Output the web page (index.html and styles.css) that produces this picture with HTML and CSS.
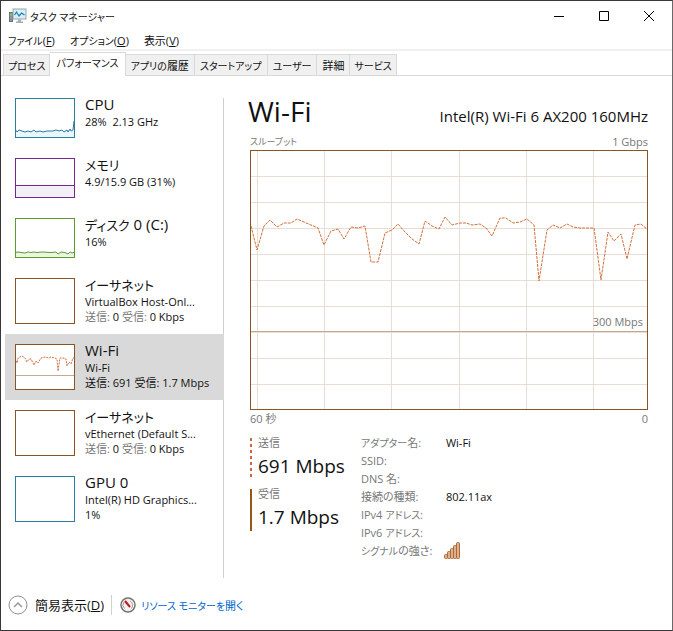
FILE: index.html
```html
<!DOCTYPE html>
<html lang="ja">
<head>
    <meta charset="UTF-8">
    <meta name="viewport" content="width=device-width, initial-scale=1.0">
    <title>タスク マネージャー</title>
    <link rel="stylesheet" href="styles.css">
</head>
<body>
    <div class="window">
        <header class="titlebar">
            <svg class="app-icon" width="18" height="16" viewBox="0 0 18 16">
                <rect x="0.5" y="4.5" width="3" height="9" fill="#8b9299" stroke="#6d747a"/>
                <rect x="1" y="6" width="2" height="2" fill="#6fcf5a"/>
                <rect x="4" y="1" width="13" height="10" fill="#dcebf5" stroke="#9aa3aa"/>
                <rect x="5.5" y="2.5" width="10" height="7" fill="#d5f0fb"/>
                <path d="M5.500 7 L7.500 4 L10 8 L12.500 5 L15.500 7" fill="none" stroke="#1a7fae" stroke-width="1.200"/>
                <path d="M9 11.500h3v2h2v1.500H7v-1.500h2z" fill="#a6adb3"/>
            </svg>
            <span class="title">タスク マネージャー</span>
            <div class="window-buttons">
                <button type="button" aria-label="最小化"><svg width="12" height="12" viewBox="0 0 12 12"><path d="M1 6.500h10"/></svg></button>
                <button type="button" aria-label="最大化"><svg width="12" height="12" viewBox="0 0 12 12"><path d="M1.500 1.500h9v9h-9z"/></svg></button>
                <button type="button" aria-label="閉じる"><svg width="12" height="12" viewBox="0 0 12 12"><path d="M1 1l10 10M11 1L1 11"/></svg></button>
            </div>
        </header>

        <nav class="menubar">
            <button type="button"><span class="kana">ファイル</span>(<u>F</u>)</button>
            <button type="button"><span class="kana">オプション</span>(<u>O</u>)</button>
            <button type="button">表示(<u>V</u>)</button>
        </nav>

        <div class="tabs" role="tablist">
            <button type="button" role="tab"><span class="kana">プロセス</span></button>
            <button type="button" role="tab" class="active" aria-selected="true"><span class="kana">パフォーマンス</span></button>
            <button type="button" role="tab"><span class="kana">アプリの</span>履歴</button>
            <button type="button" role="tab"><span class="kana">スタートアップ</span></button>
            <button type="button" role="tab"><span class="kana">ユーザー</span></button>
            <button type="button" role="tab">詳細</button>
            <button type="button" role="tab"><span class="kana">サービス</span></button>
        </div>

        <div class="content">
            <aside class="sidebar">
                <button type="button" class="item">
                    <svg class="thumb short cpu" viewBox="0 0 60 40" preserveAspectRatio="none">
                        <path class="area" d="M0 31L2 34 4 32 7 33 10 34 13 33 16 34 19 32 21 34 25 33 28 34 32 33 38 33 41 32 44 33 47 32 49 34 52 32 53 34 55 31 56 33 58 32 59 23 60 22V40H0z"/>
                        <path class="line" d="M0 31L2 34 4 32 7 33 10 34 13 33 16 34 19 32 21 34 25 33 28 34 32 33 38 33 41 32 44 33 47 32 49 34 52 32 53 34 55 31 56 33 58 32 59 23 60 22"/>
                        <rect class="frame" width="60" height="40"/>
                    </svg>
                    <span class="info">
                        <span class="name">CPU</span>
                        <span class="detail">28%&nbsp; 2.13 GHz</span>
                    </span>
                </button>
                <button type="button" class="item">
                    <svg class="thumb short memory" viewBox="0 0 60 40" preserveAspectRatio="none">
                        <path class="area" d="M0 27.500H60V40H0z"/>
                        <path class="line" d="M0 27.500H60"/>
                        <rect class="frame" width="60" height="40"/>
                    </svg>
                    <span class="info">
                        <span class="name"><span class="kana">メモリ</span></span>
                        <span class="detail">4.9/15.9 GB (31%)</span>
                    </span>
                </button>
                <button type="button" class="item">
                    <svg class="thumb short disk" viewBox="0 0 60 40" preserveAspectRatio="none">
                        <path class="area" d="M0 34.500L3 34 6 34.500 10 35 13 34 16 34.500 19 34 22 34.500 27 34 36 34.500 41 34 43 36 46 34 50 34.500 53 36 55 34 57 35 60 34V40H0z"/>
                        <path class="line" d="M0 34.500L3 34 6 34.500 10 35 13 34 16 34.500 19 34 22 34.500 27 34 36 34.500 41 34 43 36 46 34 50 34.500 53 36 55 34 57 35 60 34"/>
                        <rect class="frame" width="60" height="40"/>
                    </svg>
                    <span class="info">
                        <span class="name"><span class="kana">ディスク</span> 0 (C:)</span>
                        <span class="detail">16%</span>
                    </span>
                </button>
                <button type="button" class="item">
                    <svg class="thumb net" viewBox="0 0 60 46"><rect class="frame" width="60" height="46"/></svg>
                    <span class="info">
                        <span class="name"><span class="kana">イーサネット</span></span>
                        <span class="detail">VirtualBox Host-Onl...</span>
                        <span class="detail"><span class="muted">送信:</span> 0 <span class="muted">受信:</span> 0 Kbps</span>
                    </span>
                </button>
                <button type="button" class="item selected">
                    <svg class="thumb net" viewBox="0 0 60 46">
                        <path class="dashes" d="M0 14L2 19 3 14 7 12 10 14 12 18 14 15 16 15 19 21 21 17 23 19 26 14 30 13 34 14 36 13 40 14 42 15 43 27 45 14 48 14 51 15 52 22 54 18 56 20 58 14 60 14"/>
                        <path class="scale" d="M0 31.500H60"/>
                        <rect class="frame" width="60" height="46"/>
                    </svg>
                    <span class="info">
                        <span class="name">Wi-Fi</span>
                        <span class="detail">Wi-Fi</span>
                        <span class="detail">送信: 691 受信: 1.7 Mbps</span>
                    </span>
                </button>
                <button type="button" class="item">
                    <svg class="thumb net" viewBox="0 0 60 46"><rect class="frame" width="60" height="46"/></svg>
                    <span class="info">
                        <span class="name"><span class="kana">イーサネット</span></span>
                        <span class="detail">vEthernet (Default S...</span>
                        <span class="detail"><span class="muted">送信:</span> 0 <span class="muted">受信:</span> 0 Kbps</span>
                    </span>
                </button>
                <button type="button" class="item">
                    <svg class="thumb gpu" viewBox="0 0 60 46"><rect class="frame" width="60" height="46"/></svg>
                    <span class="info">
                        <span class="name">GPU 0</span>
                        <span class="detail">Intel(R) HD Graphics...</span>
                        <span class="detail">1%</span>
                    </span>
                </button>
            </aside>

            <main class="panel">
                <div class="heading">
                    <h1>Wi-Fi</h1>
                    <span class="adapter">Intel(R) Wi-Fi 6 AX200 160MHz</span>
                </div>
                <div class="axis">
                    <span class="kana">スループット</span>
                    <span>1 Gbps</span>
                </div>
                <div class="chart">
                    <svg viewBox="0 0 398 260" preserveAspectRatio="none">
                        <path class="grid" d="M7.500 0V260M74.500 0V260M141.500 0V260M209.500 0V260M276.500 0V260M343.500 0V260"/>
                        <path class="grid" d="M0 26.500H398M0 52.500H398M0 78.500H398M0 104.500H398M0 130.500H398M0 156.500H398M0 182.500H398M0 208.500H398M0 234.500H398"/>
                        <path class="scale" d="M0 181.500H398"/>
                        <polyline class="dashes" points="0,72 7,100 14,76 20,70 27,77 34,73 41,73 47,69 54,72 61,75 68,78 74,95 81,81 88,79 94,89 101,77 108,78 115,76 121,112 128,112 135,83 142,80 148,74 155,82 162,89 169,94 175,71 182,76 189,79 195,67 202,75 210,73 216,73 222,75 230,74 236,78 242,86 250,68 256,68 263,73 270,72 277,69 284,75 289,131 297,80 303,75 310,78 317,74 323,77 330,78 344,78 351,130 358,82 364,91 371,84 377,109 385,75 391,74 398,80"/>
                        <rect class="frame" width="398" height="260"/>
                    </svg>
                    <span class="scale-label">300 Mbps</span>
                </div>
                <div class="axis bottom">
                    <span>60 秒</span>
                    <span>0</span>
                </div>

                <div class="stats">
                    <div class="rates">
                        <div class="rate send">
                            <span class="label">送信</span>
                            <span class="value">691 Mbps</span>
                        </div>
                        <div class="rate receive">
                            <span class="label">受信</span>
                            <span class="value">1.7 Mbps</span>
                        </div>
                    </div>
                    <dl class="properties">
                        <dt><span class="kana">アダプター</span>名:</dt><dd>Wi-Fi</dd>
                        <dt>SSID:</dt><dd></dd>
                        <dt>DNS 名:</dt><dd></dd>
                        <dt>接続の種類:</dt><dd>802.11ax</dd>
                        <dt>IPv4 <span class="kana">アドレス:</span></dt><dd></dd>
                        <dt>IPv6 <span class="kana">アドレス:</span></dt><dd></dd>
                        <dt><span class="kana">シグナル</span>の強さ:</dt>
                        <dd>
                            <svg class="signal" width="17" height="17" viewBox="0 0 17 17">
                                <rect x="0.5" y="12.500" width="3" height="4" rx="1"/>
                                <rect x="3.500" y="9.500" width="3" height="7" rx="1"/>
                                <rect x="6.500" y="6.500" width="3" height="10" rx="1"/>
                                <rect x="9.500" y="3.500" width="3" height="13" rx="1"/>
                                <rect x="12.500" y="0.500" width="3" height="16" rx="1"/>
                            </svg>
                        </dd>
                    </dl>
                </div>
            </main>
        </div>

        <footer class="footer">
            <button type="button" class="fewer">
                <svg width="20" height="20" viewBox="0 0 20 20">
                    <circle cx="10" cy="10" r="9" fill="#fff" stroke="#8f8f8f"/>
                    <path d="M6 12l4-4 4 4" fill="none" stroke="#999" stroke-width="1.500"/>
                </svg>
                <span>簡易表示(<u>D</u>)</span>
            </button>
            <a class="monitor" href="#">
                <svg width="16" height="16" viewBox="0 0 16 16">
                    <circle cx="8" cy="8" r="7" fill="#f4f2ee" stroke="#77736f" stroke-width="1.500"/>
                    <path d="M4.500 11.500A5 5 0 0 1 4 5M10 4a5 5 0 0 1 1.500 7.500" fill="none" stroke="#a39e99"/>
                    <path d="M5 4L10 10" stroke="#c8141c" stroke-width="2"/>
                </svg>
                <span><span class="kana">リソース モニターを</span>開く</span>
            </a>
        </footer>
    </div>
</body>
</html>
```
FILE: styles.css
```css
* {
    box-sizing: border-box;
}
body {
    margin: 0;
    background: #fff;
    color: #111;
    font-family: "Open Sans", "Noto Sans CJK JP", sans-serif;
    font-size: 11px;
    font-feature-settings: "palt";
}
button {
    padding: 0;
    border: none;
    background: none;
    color: inherit;
    font: inherit;
    font-feature-settings: inherit;
    text-align: left;
    white-space: nowrap;
}
svg {
    display: block;
    flex: none;
}
.kana {
    font-size: 10px;
}
.window {
    display: flex;
    flex-direction: column;
    min-height: 100vh;
    border: 1px solid #3a3638;
    border-right-color: #6b686a;
}

/* title bar and menu */
.titlebar {
    display: flex;
    align-items: center;
    height: 30px;
    padding-left: 8px;
}
.title {
    margin-left: 3px;
    font-size: 10px;
}
.window-buttons {
    display: flex;
    margin-left: auto;
    padding-right: 1px;
}
.window-buttons button {
    display: flex;
    align-items: center;
    justify-content: center;
    width: 45px;
    height: 28px;
}
.window-buttons path {
    fill: none;
    stroke: #000;
}
.menubar {
    display: flex;
    gap: 15px;
    height: 20px;
    padding-left: 7px;
    border-bottom: 2px solid #f0f0f0;
}

/* tabs */
.tabs {
    display: flex;
    align-items: flex-end;
    height: 25px;
    padding-left: 2px;
    border-bottom: 1px solid #d9d9d9;
}
.tabs button {
    height: 21px;
    padding: 0 5px;
    border: 1px solid #d9d9d9;
    border-left: none;
    border-bottom: none;
    background: #f0f0f0;
}
.tabs button:first-child {
    padding: 0 4px;
    border-left: 1px solid #d9d9d9;
}
.tabs button:last-child {
    padding: 0 4px;
}
.tabs .active {
    height: 24px;
    margin-bottom: -1px;
    padding: 0 6px 4px;
    background: #fff;
}

/* resource list */
.content {
    display: flex;
    flex: 1;
    padding-left: 4px;
}
.sidebar {
    display: flex;
    flex-direction: column;
    width: 219px;
    margin-bottom: 2px;
    padding-top: 12px;
    background: linear-gradient(#d0d0d0, #d0d0d0) right 22px / 1px no-repeat;
}
.item {
    display: flex;
    align-items: flex-start;
    gap: 10px;
    padding: 10px 0 10px 10px;
}
.item.selected {
    background: #d9d9d9;
}
.thumb {
    width: 60px;
    height: 46px;
    background: #fff;
}
.thumb.short {
    height: 40px;
}
.info {
    display: flex;
    flex-direction: column;
    margin-top: -3px;
}
.name {
    height: 19px;
    font-size: 15px;
    line-height: 19px;
}
.name .kana {
    font-size: 13px;
}
.detail {
    height: 15px;
    font-size: 11px;
    line-height: 15px;
}
.muted {
    color: #777;
}
.frame {
    fill: none;
    stroke-width: 2;
}
.line {
    fill: none;
    stroke-width: 1;
}
.cpu .frame, .gpu .frame, .cpu .line {
    stroke: #2a7d9f;
}
.cpu .area {
    fill: #eaf6fd;
}
.memory .frame, .memory .line {
    stroke: #7b2393;
}
.memory .area {
    fill: #f3eff6;
}
.disk .frame, .disk .line {
    stroke: #5a9b32;
}
.disk .area {
    fill: #eaf6e2;
}
.net .frame, .chart .frame {
    stroke: #8b5523;
}
.dashes {
    fill: none;
    stroke: #d0703c;
    stroke-dasharray: 3 1;
}
.thumb .dashes {
    stroke-dasharray: 2 1;
}
.scale {
    fill: none;
    stroke: #c5a88f;
}

/* selected resource */
.panel {
    flex: 1;
    padding: 15px 24px 0 26px;
}
.heading {
    display: flex;
    align-items: baseline;
    justify-content: space-between;
    height: 43px;
}
h1 {
    margin: 0 0 0 -2px;
    font-size: 28px;
    font-weight: normal;
    line-height: 40px;
}
.adapter {
    font-size: 15px;
}
.axis {
    display: flex;
    justify-content: space-between;
    height: 16px;
    color: #777;
    line-height: 16px;
}
.axis .kana {
    font-size: 9px;
}
.chart {
    position: relative;
    height: 260px;
}
.chart svg {
    width: 100%;
    height: 100%;
}
.grid {
    fill: none;
    stroke: #eaddd3;
}
.scale-label {
    position: absolute;
    right: 5px;
    bottom: 80px;
    color: #777;
    line-height: 16px;
}
.axis.bottom {
    height: 17px;
    line-height: 18px;
}
.stats {
    display: flex;
    gap: 16px;
    padding-top: 7px;
}
.rates {
    display: flex;
    flex-direction: column;
    gap: 9px;
    padding-top: 4px;
}
.rate {
    display: flex;
    flex-direction: column;
    height: 42px;
    padding-left: 6px;
    border-left: 2px solid #9a5510;
}
.rate.send {
    border-left: none;
    padding-left: 8px;
    background: repeating-linear-gradient(#c8683a 0 3px, transparent 3px 6px) left / 2px no-repeat;
}
.rate .label {
    color: #777;
    line-height: 10px;
}
.rate .value {
    font-size: 19px;
    line-height: 36px;
}
.properties {
    display: grid;
    grid-template-columns: 85px 1fr;
    grid-auto-rows: 18px;
    margin: 0;
    line-height: 18px;
}
.properties dt {
    color: #777;
}
.properties dd {
    margin: 0;
}
.signal {
    margin-left: -2px;
}
.signal rect {
    fill: #e0b088;
    stroke: #a86a3c;
}

/* footer */
.footer {
    display: flex;
    align-items: center;
    height: 50px;
    padding-left: 7px;
}
.fewer, .monitor {
    display: flex;
    align-items: center;
    gap: 7px;
}
.fewer {
    padding-right: 7px;
    border-right: 1px solid #d0d0d0;
    font-size: 13px;
    line-height: 16px;
}
.monitor {
    gap: 5px;
    margin-left: 8px;
    color: #0066cc;
    text-decoration: none;
}
```
